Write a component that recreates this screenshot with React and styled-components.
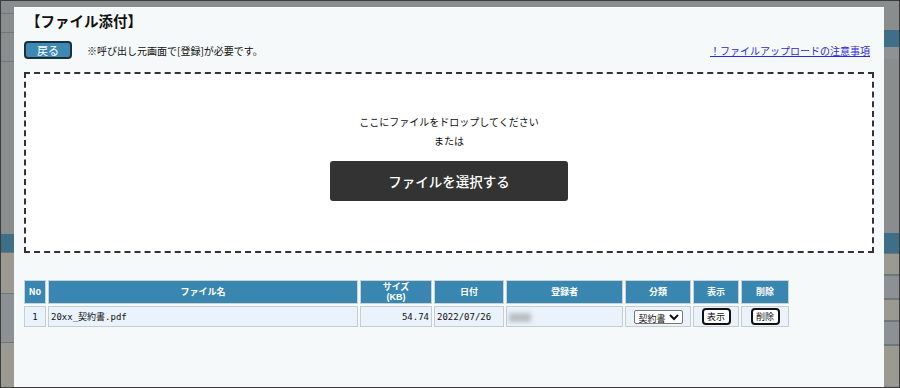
import React from 'react';
import styled, { createGlobalStyle } from 'styled-components';

const GlobalStyle = createGlobalStyle`
  html, body {
    margin: 0;
    padding: 0;
  }
  body {
    font-family: "Noto Sans CJK JP", "Liberation Sans", sans-serif;
  }
`

const Backdrop = styled.div`
  position: relative;
  width: 900px;
  height: 388px;
  box-sizing: border-box;
  border: 1px solid #3c3c3c;
  background: #8a8d8e;
  overflow: hidden;
`

const BgPage = styled.div`
  display: flex;
  justify-content: space-between;
  height: 100%;
`

const BgStrip = styled.div`
  display: flex;
  flex-direction: column;
  width: 16px;
`

const BgCell = styled.div`
  flex: none;
  height: ${({ h }) => h}px;
  background: ${({ tone }) => tone};
`

const Modal = styled.div`
  position: absolute;
  left: 13px;
  top: 6px;
  width: 870px;
  bottom: 0;
  background: #f6f9f9;
  border-top: 1px solid #fdfdfd;
  padding: 0 10px;
  box-sizing: border-box;
`

const Title = styled.h1`
  margin: 0;
  padding: 3px 0 0 2px;
  font-size: 14.5px;
  font-weight: 700;
  line-height: 20px;
  color: #111;
`

const Toolbar = styled.div`
  display: flex;
  align-items: center;
  margin-top: 10px;
  height: 18px;
`

const BackButton = styled.button`
  width: 48px;
  height: 18px;
  padding: 0;
  border: 2px solid #1d2f3a;
  border-radius: 4px;
  background: #3d89b3;
  color: #fff;
  font-family: inherit;
  font-size: 11px;
  line-height: 14px;
  cursor: pointer;
`

const Note = styled.span`
  margin-left: 15px;
  font-size: 10px;
  color: #111;
`

const NoticeLink = styled.a`
  margin-left: auto;
  margin-right: 4px;
  font-size: 10px;
  color: #2a2ae0;
  text-decoration: underline;
`

const DropZone = styled.div`
  margin-top: 13px;
  height: 181px;
  box-sizing: border-box;
  border: 2px dashed #333;
  background: #fff;
  display: flex;
  flex-direction: column;
  align-items: center;
  padding-top: 38px;
`

const DropText = styled.p`
  margin: 0;
  font-size: 10px;
  line-height: 19px;
  color: #111;
`

const SelectButton = styled.button`
  margin-top: 11px;
  width: 238px;
  height: 40px;
  border: none;
  border-radius: 3px;
  background: #333;
  color: #fff;
  font-family: inherit;
  font-size: 13.5px;
  font-weight: 500;
  cursor: pointer;
`

const Table = styled.table`
  margin-top: 25px;
  margin-left: -2px;
  border-collapse: separate;
  border-spacing: 2px;
`

const Th = styled.th`
  width: ${({ w }) => w}px;
  height: 22px;
  padding: 0;
  background: #3987b1;
  border: 1px solid #c9d2d6;
  color: #fff;
  font-size: 9px;
  font-weight: 700;
  line-height: 10px;
  text-align: center;
`

const HeadLine = styled.span`
  display: block;
  line-height: 11px;
  font-family: ${({ latin }) => (latin ? '"Liberation Sans", sans-serif' : 'inherit')};
`

const Td = styled.td`
  height: 19px;
  padding: 0 2px;
  background: #eaf3fb;
  border: 1px solid #c9cccd;
  font-family: "DejaVu Sans Mono", "Noto Sans CJK JP", monospace;
  font-size: 9px;
  color: #111;
  text-align: ${({ align }) => align || 'left'};
  vertical-align: middle;
`

const Blur = styled.span`
  display: inline-block;
  width: 22px;
  height: 9px;
  background: #b9bfc4;
  filter: blur(2px);
  vertical-align: middle;
`

const CategorySelect = styled.select`
  width: 49px;
  height: 14px;
  padding: 0;
  font-family: "Noto Sans CJK JP", sans-serif;
  font-size: 9px;
  border: 1px solid #777;
  border-radius: 2px;
  background: #fff;
  color: #111;
`

const SmallButton = styled.button`
  width: 29px;
  height: 17px;
  padding: 0;
  border: 2px solid #111;
  border-radius: 4px;
  background: #fff;
  font-family: "Noto Sans CJK JP", sans-serif;
  font-size: 9px;
  line-height: 12px;
  color: #111;
  cursor: pointer;
`

const line = '#6f777c'
const blue = '#3f6f88'
const leftCells = [
  ['#8a8d8e', 12], [line, 1], ['#8a8d8e', 18], [line, 1], ['#8a8d8e', 28], [line, 1],
  ['#8a8d8e', 172], [blue, 18], [line, 1], ['#9a9a90', 40], [line, 1],
  ['#8c9196', 48], [line, 1], ['#9a9a90', 60],
]
const rightCells = [
  ['#8a8d8e', 29], [blue, 17], ['#8f9294', 12], ['#8a8d8e', 174], [blue, 20],
  [line, 1], ['#9a9a90', 20], [line, 2], ['#8c9196', 22], [line, 2],
  ['#9a9a90', 20], [line, 2], ['#8c9196', 22], [line, 2], ['#9a9a90', 40],
]

function App() {
  return (
    <>
      <GlobalStyle />
      <Backdrop>
        <BgPage>
          <BgStrip>
            {leftCells.map(([tone, h], i) => <BgCell key={i} tone={tone} h={h} />)}
          </BgStrip>
          <BgStrip>
            {rightCells.map(([tone, h], i) => <BgCell key={i} tone={tone} h={h} />)}
          </BgStrip>
        </BgPage>
        <Modal>
          <Title>【ファイル添付】</Title>
          <Toolbar>
            <BackButton>戻る</BackButton>
            <Note>※呼び出し元画面で[登録]が必要です。</Note>
            <NoticeLink href="#">！ファイルアップロードの注意事項</NoticeLink>
          </Toolbar>
          <DropZone>
            <DropText>ここにファイルをドロップしてください</DropText>
            <DropText>または</DropText>
            <SelectButton>ファイルを選択する</SelectButton>
          </DropZone>
          <Table>
            <thead>
              <tr>
                <Th w={20}>No</Th>
                <Th w={308}>ファイル名</Th>
                <Th w={70}>
                  <HeadLine>サイズ</HeadLine>
                  <HeadLine latin>(KB)</HeadLine>
                </Th>
                <Th w={68}>日付</Th>
                <Th w={115}>登録者</Th>
                <Th w={64}>分類</Th>
                <Th w={44}>表示</Th>
                <Th w={46}>削除</Th>
              </tr>
            </thead>
            <tbody>
              <tr>
                <Td align="center">1</Td>
                <Td>20xx_契約書.pdf</Td>
                <Td align="right">54.74</Td>
                <Td>2022/07/26</Td>
                <Td><Blur /></Td>
                <Td align="center">
                  <CategorySelect defaultValue="契約書">
                    <option>契約書</option>
                  </CategorySelect>
                </Td>
                <Td align="center"><SmallButton>表示</SmallButton></Td>
                <Td align="center"><SmallButton>削除</SmallButton></Td>
              </tr>
            </tbody>
          </Table>
        </Modal>
      </Backdrop>
    </>
  )
}

export default App;
